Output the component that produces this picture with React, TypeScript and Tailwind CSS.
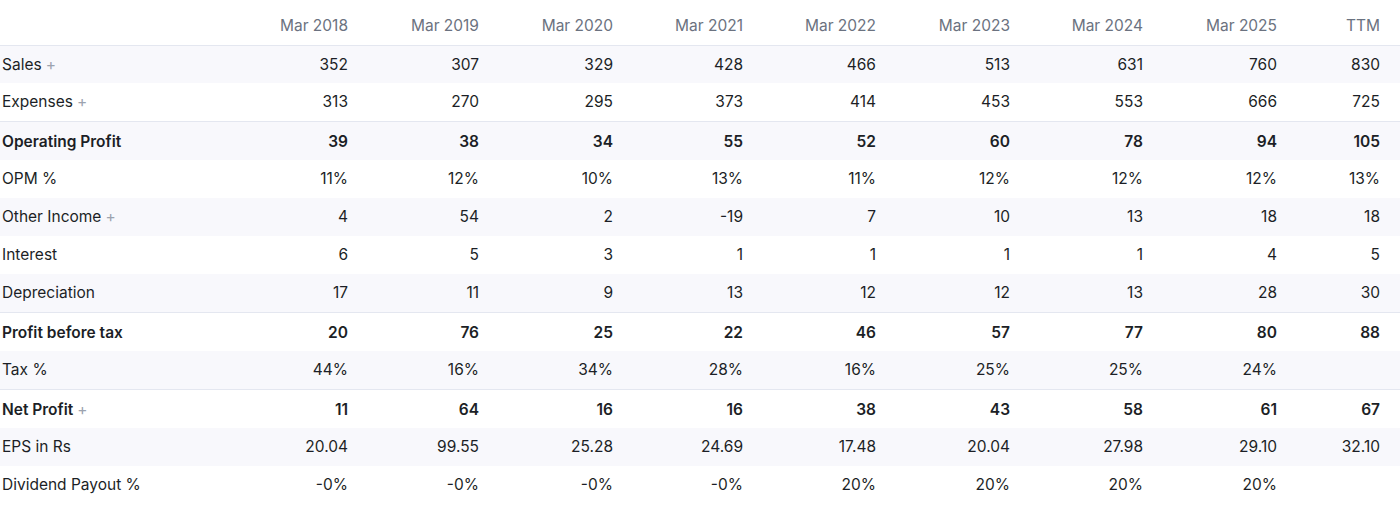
import React from 'react';

type Row = {
  label: string;
  values: string[];
  expandable?: boolean;
  strong?: boolean;
};

const years = ['Mar 2018', 'Mar 2019', 'Mar 2020', 'Mar 2021', 'Mar 2022', 'Mar 2023', 'Mar 2024', 'Mar 2025', 'TTM'];

// label column + year columns (measured, not perfectly even); TTM takes the rest
const colWidths = ['w-[223px]', 'w-[133px]', 'w-[131px]', 'w-[134px]', 'w-[130px]', 'w-[133px]', 'w-[134px]', 'w-[133px]', 'w-[134px]'];

const rows: Row[] = [
  { label: 'Sales', expandable: true, values: ['352', '307', '329', '428', '466', '513', '631', '760', '830'] },
  { label: 'Expenses', expandable: true, values: ['313', '270', '295', '373', '414', '453', '553', '666', '725'] },
  { label: 'Operating Profit', strong: true, values: ['39', '38', '34', '55', '52', '60', '78', '94', '105'] },
  { label: 'OPM %', values: ['11%', '12%', '10%', '13%', '11%', '12%', '12%', '12%', '13%'] },
  { label: 'Other Income', expandable: true, values: ['4', '54', '2', '-19', '7', '10', '13', '18', '18'] },
  { label: 'Interest', values: ['6', '5', '3', '1', '1', '1', '1', '4', '5'] },
  { label: 'Depreciation', values: ['17', '11', '9', '13', '12', '12', '13', '28', '30'] },
  { label: 'Profit before tax', strong: true, values: ['20', '76', '25', '22', '46', '57', '77', '80', '88'] },
  { label: 'Tax %', values: ['44%', '16%', '34%', '28%', '16%', '25%', '25%', '24%', ''] },
  { label: 'Net Profit', strong: true, expandable: true, values: ['11', '64', '16', '16', '38', '43', '58', '61', '67'] },
  { label: 'EPS in Rs', values: ['20.04', '99.55', '25.28', '24.69', '17.48', '20.04', '27.98', '29.10', '32.10'] },
  { label: 'Dividend Payout %', values: ['-0%', '-0%', '-0%', '-0%', '20%', '20%', '20%', '20%', ''] },
];

export default function App() {
  return (
    <div className="w-[1400px] h-[505px] bg-white overflow-hidden font-['Inter',_'Liberation_Sans',_sans-serif] text-[15.5px] text-[#1c1f26]">
      <table className="w-full table-fixed border-collapse">
        <colgroup>
          {colWidths.map((w, i) => (
            <col key={i} className={w} />
          ))}
          <col />
        </colgroup>
        <thead>
          <tr className="border-b border-[#e4e7f0]">
            <th className="h-[45px]" />
            {years.map((y, i) => (
              <th
                key={y}
                className={`h-[45px] pt-[6px] text-right font-normal text-[#6b7280] align-middle ${i === 8 ? 'pr-5' : 'pr-2'}`}
              >
                {y}
              </th>
            ))}
          </tr>
        </thead>
        <tbody>
          {rows.map((r, idx) => (
            <tr
              key={r.label}
              className={`${idx % 2 === 0 ? 'bg-[#f8f8fc]' : 'bg-white'} ${r.strong ? 'border-t border-[#e4e7f0] font-semibold' : ''}`}
            >
              <td className={`${r.strong ? 'h-[39px] pt-[1px]' : 'h-[38px] pt-0'} pl-0.5 whitespace-nowrap align-middle`}>
                {r.label}
                {r.expandable && <span className="ml-1 font-normal text-[#9ca3af]">+</span>}
              </td>
              {r.values.map((v, i) => (
                <td
                  key={i}
                  className={`${r.strong ? 'h-[39px] pt-[1px]' : 'h-[38px] pt-0'} text-right align-middle ${i === 8 ? 'pr-5' : 'pr-2'}`}
                >
                  {v}
                </td>
              ))}
            </tr>
          ))}
        </tbody>
      </table>
    </div>
  );
}
